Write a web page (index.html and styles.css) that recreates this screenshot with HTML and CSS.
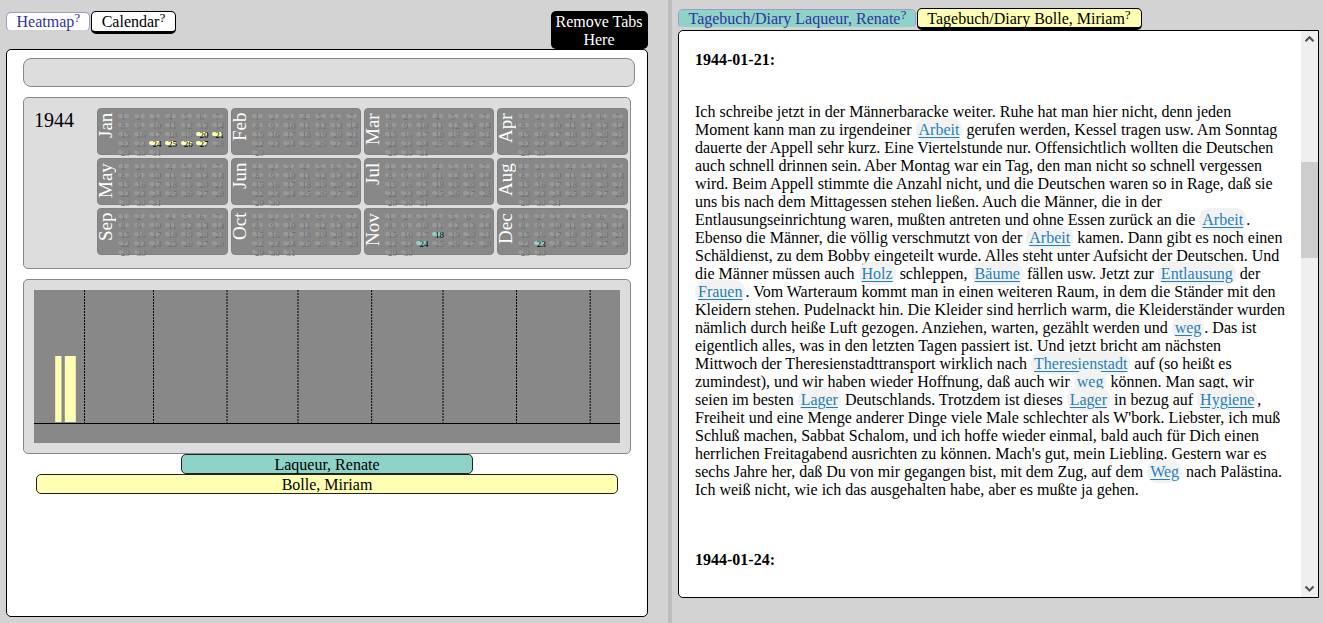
FILE: index.html
```
<!DOCTYPE html>
<html lang="de">
<head>
<meta charset="utf-8">
<title>Tagebuch</title>
<link rel="stylesheet" href="styles.css">
</head>
<body>
<div class="app">
  <section class="left">
    <header class="left-head">
      <div class="tabs">
        <div class="tab">Heatmap<sup>?</sup></div>
        <div class="tab active">Calendar<sup>?</sup></div>
      </div>
      <div class="remove">Remove Tabs Here</div>
    </header>
    <main class="board">
      <div class="search"></div>
      <div class="panel year">
        <div class="year-label">1944</div>
        <div class="months" id="months"></div>
      </div>
      <div class="panel chart">
        <svg width="586" height="153" viewBox="0 0 586 153">
          <rect width="586" height="153" fill="#888"/>
          <g stroke="#000" stroke-dasharray="2 1">
            <path d="M50.5 0V133M119.5 0V133M193 0V133M264 0V133M337.7 0V133M409 0V133M482.5 0V133M556.2 0V133"/>
          </g>
          <path d="M0 133.5H586" stroke="#000"/>
          <g fill="#ffffb3"><rect x="21.2" y="66" width="6.3" height="66"/><rect x="30.8" y="66" width="11" height="66"/></g>
        </svg>
      </div>
      <div class="person teal">Laqueur, Renate</div>
      <div class="person yellow">Bolle, Miriam</div>
    </main>
  </section>
  <div class="divider"></div>
  <section class="right">
    <div class="tabs">
      <div class="tab teal">Tagebuch/Diary Laqueur, Renate<sup>?</sup></div>
      <div class="tab active yellow">Tagebuch/Diary Bolle, Miriam<sup>?</sup></div>
    </div>
    <div class="reader">
      <article class="text">
        <h4>1944-01-21:</h4>
        <p>Ich schreibe jetzt in der Männerbaracke weiter. Ruhe hat man hier nicht, denn jeden<br>
Moment kann man zu irgendeiner <a>Arbeit</a> gerufen werden, Kessel tragen usw. Am Sonntag<br>
dauerte der Appell sehr kurz. Eine Viertelstunde nur. Offensichtlich wollten die Deutschen<br>
auch schnell drinnen sein. Aber Montag war ein Tag, den man nicht so schnell vergessen<br>
wird. Beim Appell stimmte die Anzahl nicht, und die Deutschen waren so in Rage, daß sie<br>
uns bis nach dem Mittagessen stehen ließen. Auch die Männer, die in der<br>
Entlausungseinrichtung waren, mußten antreten und ohne Essen zurück an die <a>Arbeit</a>.<br>
Ebenso die Männer, die völlig verschmutzt von der <a>Arbeit</a> kamen. Dann gibt es noch einen<br>
Schäldienst, zu dem Bobby eingeteilt wurde. Alles steht unter Aufsicht der Deutschen. Und<br>
die Männer müssen auch <a>Holz</a> schleppen, <a>Bäume</a> fällen usw. Jetzt zur <a>Entlausung</a> der<br>
<a>Frauen</a>. Vom Warteraum kommt man in einen weiteren Raum, in dem die Ständer mit den<br>
Kleidern stehen. Pudelnackt hin. Die Kleider sind herrlich warm, die Kleiderständer wurden<br>
nämlich durch heiße Luft gezogen. Anziehen, warten, gezählt werden und <a>weg</a>. Das ist<br>
eigentlich alles, was in den letzten Tagen passiert ist. Und jetzt bricht am nächsten<br>
Mittwoch der Theresienstadttransport wirklich nach <a>Theresienstadt</a> auf (so heißt es<br>
zumindest), und wir haben wieder Hoffnung, daß auch wir <a>weg</a> können. Man sagt, wir<br>
seien im besten <a>Lager</a> Deutschlands. Trotzdem ist dieses <a>Lager</a> in bezug auf <a>Hygiene</a>,<br>
Freiheit und eine Menge anderer Dinge viele Male schlechter als W'bork. Liebster, ich muß<br>
Schluß machen, Sabbat Schalom, und ich hoffe wieder einmal, bald auch für Dich einen<br>
herrlichen Freitagabend ausrichten zu können. Mach's gut, mein Liebling. Gestern war es<br>
sechs Jahre her, daß Du von mir gegangen bist, mit dem Zug, auf dem <a>Weg</a> nach Palästina.<br>
Ich weiß nicht, wie ich das ausgehalten habe, aber es mußte ja gehen.</p>
        <h4>1944-01-24:</h4>
      </article>
      <div class="scroll">
        <svg width="17" height="17"><path d="M4.5 10.2L8.5 6.2L12.5 10.2" fill="none" stroke="#555" stroke-width="2.2"/></svg>
        <div class="track"><div class="thumb"></div></div>
        <svg width="17" height="17"><path d="M4.5 6.5L8.5 10.5L12.5 6.5" fill="none" stroke="#555" stroke-width="2.2"/></svg>
      </div>
    </div>
  </section>
</div>
<script src="calendar.js"></script>
</body>
</html>
```
FILE: styles.css
```
* { box-sizing: border-box; }
body { margin: 0; background: #d3d3d3; font: 16px/18px "Liberation Serif", "Times New Roman", serif; color: #000; }
.app { display: flex; width: 1323px; height: 623px; overflow: hidden; }
.left { width: 668px; padding: 11px 20px 0 6px; }
.divider { width: 4px; background: #bdbdbd; }
.right { width: 651px; padding: 8px 4px 0 6px; }
.tabs { display: flex; align-items: flex-start; }
.tab { height: 19px; margin-top: 1px; padding: 0 9px 0 9.5px; border: 1px solid #9b9bd0; border-bottom-color: transparent; border-radius: 5px; background: #fff; color: #3232a0; line-height: 18px; white-space: nowrap; background-clip: padding-box; }
.tab sup { font-size: 13.3px; line-height: 0; vertical-align: 5px; }
.tab.active { height: 23px; margin: 0 0 0 1px; padding-right: 10px; line-height: 20px; color: #000; border: 1px solid #000; border-bottom-width: 3px; }
.right .tab.active { margin-left: 0.5px; height: 22px; }
.tab.teal, .teal { background-color: #8dd3c7; }
.tab.yellow, .yellow { background-color: #ffffb3; }
.left-head { display: flex; justify-content: space-between; height: 38px; width: 642px; }
.remove { width: 97px; height: 38px; padding: 2px 3px 0 2px; border-radius: 5px; background: #000; color: #fff; text-align: center; }
.board { width: 642px; height: 568px; padding: 8px 16px; border: 1px solid #000; border-radius: 5px; background: #fff; }
.search { width: 612px; height: 29px; margin-bottom: 10px; border: 1px solid #888; border-radius: 8px; background: #ddd; }
.panel { width: 608px; border: 1px solid #888; border-radius: 5px; background: #ddd; }
.year { display: flex; height: 172px; padding: 10px 2px 0 10px; margin-bottom: 10px; }
.year-label { width: 63px; font-size: 20px; line-height: 24px; }
.months { display: grid; grid-template-columns: 131px 130px 130px 131px; grid-auto-rows: 47px; gap: 3px; }
.month { display: flex; border: 1px solid #808080; border-radius: 4px; background: #888; }
.month-name { display: flex; justify-content: flex-end; width: 17px; height: 45px; margin-right: 3px; padding-bottom: 4px; writing-mode: vertical-rl; transform: rotate(180deg); color: #fff; font-size: 19px; line-height: 16px; }
.days { display: grid; grid-template-columns: repeat(7, 15.7px); grid-auto-rows: 9px; padding-top: 5px; }
.day { width: 11px; height: 4px; padding-left: 3px; border-radius: 2px; background-color: #999; color: #6d6d6d; font-size: 9px; line-height: 6px; white-space: nowrap; }
.day.teal { background-color: #8dd3c7; color: #000; }
.day.yellow { background-color: #ffffb3; color: #000; }
.chart { height: 175px; padding: 10px; }
.chart svg { display: block; }
.person { height: 20px; border: 1px solid #222; border-radius: 5px; text-align: center; line-height: 20px; }
.person.teal { width: 292px; margin-left: 158px; }
.person.yellow { width: 582px; margin-left: 13px; }
.reader { display: flex; width: 641px; height: 568px; border: 1px solid #000; border-radius: 5px 0 0 5px; background: #fff; overflow: hidden; }
.text { flex: 1; padding: 20px 0 0 16px; white-space: nowrap; }
.text h4 { margin: 0; font-size: 16px; line-height: 18px; }
.text p { margin: 34px 0 52px; }
.text a { padding: 3px; border-radius: 10px; background: #f2f2f2; color: #1f7fbb; text-decoration: underline; text-underline-offset: 2px; }
.scroll { display: flex; flex-direction: column; width: 17px; background: #efefef; }
.scroll svg { display: block; }
.track { flex: 1; padding-top: 114px; }
.thumb { height: 96px; background: #cdcdcd; }
```
FILE: calendar.js
```
const names = ["Jan","Feb","Mar","Apr","May","Jun","Jul","Aug","Sep","Oct","Nov","Dec"];
const lengths = [31,29,31,30,31,30,31,31,30,31,30,30];
const marks = {
  Jan: { days: [20,21,24,25,26,27], tone: "yellow" },
  Nov: { days: [18,24], tone: "teal" },
  Dec: { days: [23], tone: "teal" }
};
document.getElementById("months").innerHTML = names.map((name, i) => {
  let days = "";
  for (let d = 1; d <= lengths[i]; d++) {
    const m = marks[name];
    days += `<div class="day ${m && m.days.includes(d) ? m.tone : ""}">${d}</div>`;
  }
  return `<div class="month"><div class="month-name">${name}</div><div class="days">${days}</div></div>`;
}).join("");
```
